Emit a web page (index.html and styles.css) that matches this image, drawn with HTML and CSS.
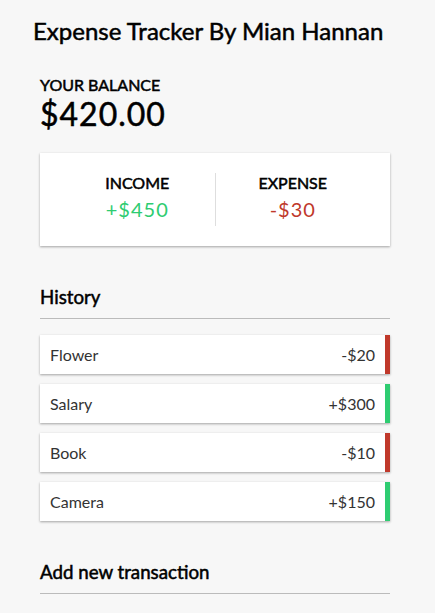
FILE: index.html
```html
<!DOCTYPE html>
<html lang="en">
  <head>
    <meta charset="UTF-8" />
    <meta name="viewport" content="width=device-width, initial-scale=1.0" />
    <title>Expense Tracker</title>
    <link rel="stylesheet" href="styles.css">
  </head>
  <body>
    <h2 class="title">Expense Tracker By Mian Hannan</h2>

    <div class="container">
      <h4>Your Balance</h4>
      <h1 id="balance">$420.00</h1>

      <div class="inc-exp-container">
        <div>
          <h4>Income</h4>
          <p class="money plus">+$450</p>
        </div>
        <div>
          <h4>Expense</h4>
          <p class="money minus">-$30</p>
        </div>
      </div>

      <h3>History</h3>
      <ul class="list">
        <li class="minus">Flower <span>-$20</span></li>
        <li class="plus">Salary <span>+$300</span></li>
        <li class="minus">Book <span>-$10</span></li>
        <li class="plus">Camera <span>+$150</span></li>
      </ul>

      <h3>Add new transaction</h3>
    </div>
  </body>
</html>
```

FILE: styles.css
```css
* {
  box-sizing: border-box;
}
body {
  background-color: #f7f7f7;
  margin: 0;
  padding: 16px 0 0 40px;
  font-family: "Lato", "Liberation Sans", sans-serif;
}
h1,
h2,
h3,
h4 {
  font-weight: 400;
  -webkit-text-stroke: 0.5px currentColor;
}
.title {
  font-size: 24px;
  margin: 0 0 0 -7px;
}
.container {
  width: 350px;
  margin: 30px 0;
}
h1 {
  letter-spacing: 1px;
  margin: 0;
}
h3 {
  border-bottom: 1px solid #bbb;
  padding-bottom: 10px;
  margin: 40px 0 10px;
}
h4 {
  margin: 0;
  text-transform: uppercase;
}
.inc-exp-container {
  background-color: #fff;
  box-shadow: 0 1px 3px rgba(0, 0, 0, 0.12), 0 1px 2px rgba(0, 0, 0, 0.24);
  padding: 20px;
  display: flex;
  justify-content: space-between;
  margin: 20px 0;
}
.inc-exp-container > div {
  flex: 1;
  text-align: center;
}
.inc-exp-container > div:first-of-type {
  border-right: 1px solid #dedede;
}
.money {
  font-size: 20px;
  letter-spacing: 1px;
  margin: 5px 0;
}
.money.plus {
  color: #2ecc71;
}
.money.minus {
  color: #c0392b;
}
.list {
  list-style-type: none;
  padding: 0;
  margin-bottom: 40px;
}
.list li {
  background-color: #fff;
  box-shadow: 0 1px 3px rgba(0, 0, 0, 0.12), 0 1px 2px rgba(0, 0, 0, 0.24);
  color: #333;
  display: flex;
  justify-content: space-between;
  padding: 10px;
  margin: 10px 0;
}
.list li.plus {
  border-right: 5px solid #2ecc71;
}
.list li.minus {
  border-right: 5px solid #c0392b;
}
```
